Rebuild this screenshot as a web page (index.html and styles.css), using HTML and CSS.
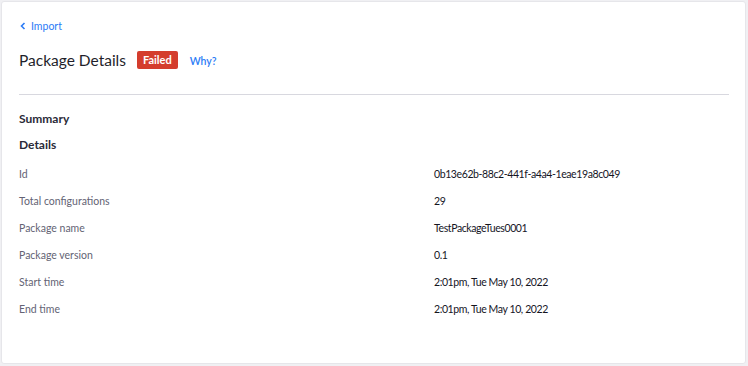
FILE: index.html
```html
<!doctype html>
<html lang="en">

<head>
  <meta charset="UTF-8" />
  <meta name="viewport" content="width=device-width, initial-scale=1.0" />
  <title>Package Details</title>
  <link rel="stylesheet" href="styles.css">
</head>

<body>
  <div class="card">
    <a class="back-link" href="#">
      <svg class="back-icon" width="6" height="8" viewBox="0 0 6 8" aria-hidden="true">
        <path d="M4.5 1 L1.5 4 L4.5 7" fill="none" stroke="currentColor" stroke-width="1.6" />
      </svg>
      Import
    </a>

    <div class="page-header">
      <h1 class="page-title">Package Details</h1>
      <span class="status-badge">Failed</span>
      <a class="why-link" href="#">Why?</a>
    </div>

    <hr class="divider">

    <h2 class="section-title">Summary</h2>
    <h3 class="section-title">Details</h3>

    <dl class="details">
      <dt>Id</dt>
      <dd>0b13e62b-88c2-441f-a4a4-1eae19a8c049</dd>
      <dt>Total configurations</dt>
      <dd>29</dd>
      <dt>Package name</dt>
      <dd>TestPackageTues0001</dd>
      <dt>Package version</dt>
      <dd>0.1</dd>
      <dt>Start time</dt>
      <dd>2:01pm, Tue May 10, 2022</dd>
      <dt>End time</dt>
      <dd>2:01pm, Tue May 10, 2022</dd>
    </dl>
  </div>
</body>

</html>
```

FILE: styles.css
```css
body,
html {
  margin: 0;
  padding: 0;
  background-color: #f0f0f3;
}

body {
  font-family: Lato, "Open Sans", Arial, sans-serif;
  color: #22222e;
}

.card {
  margin: 1px 2px 0 1px;
  height: 361px;
  background-color: #ffffff;
  border: 1px solid #e6e6ea;
  border-radius: 3px;
  padding: 0 16px 0 17px;
}

.back-link {
  display: inline-flex;
  align-items: center;
  gap: 5px;
  margin-top: 18px;
  margin-left: 1px;
  font-size: 10.5px;
  color: #2c7cf6;
  text-decoration: none;
}

.back-icon {
  display: block;
}

.page-header {
  display: flex;
  align-items: center;
  margin-top: 16px;
  height: 22px;
}

.page-title {
  margin: 0;
  font-size: 15.5px;
  font-weight: 400;
  color: #1f1f2b;
}

.status-badge {
  margin-left: 11px;
  padding: 0 6px;
  height: 18px;
  line-height: 18px;
  border-radius: 2px;
  background-color: #d43d2d;
  color: #ffffff;
  font-size: 11px;
  font-weight: 700;
}

.why-link {
  margin-left: 12px;
  margin-top: 2px;
  font-size: 10.5px;
  font-weight: 600;
  color: #2c7cf6;
  text-decoration: none;
}

.divider {
  border: none;
  border-top: 1px solid #d8d8df;
  margin: 23px 0 0 0;
}

.section-title {
  margin: 0;
  font-size: 12px;
  font-weight: 700;
  color: #2a2a38;
  line-height: 16px;
}

h2.section-title {
  margin-top: 16px;
}

h3.section-title {
  margin-top: 10px;
}

.details {
  display: grid;
  grid-template-columns: 415px 1fr;
  row-gap: 13px;
  margin: 14px 0 0 0;
  font-size: 10.5px;
  line-height: 14px;
}

.details dt {
  color: #636374;
}

.details dd {
  margin: 0;
  color: #15151f;
  font-weight: 400;
  letter-spacing: -0.4px;
}
```
